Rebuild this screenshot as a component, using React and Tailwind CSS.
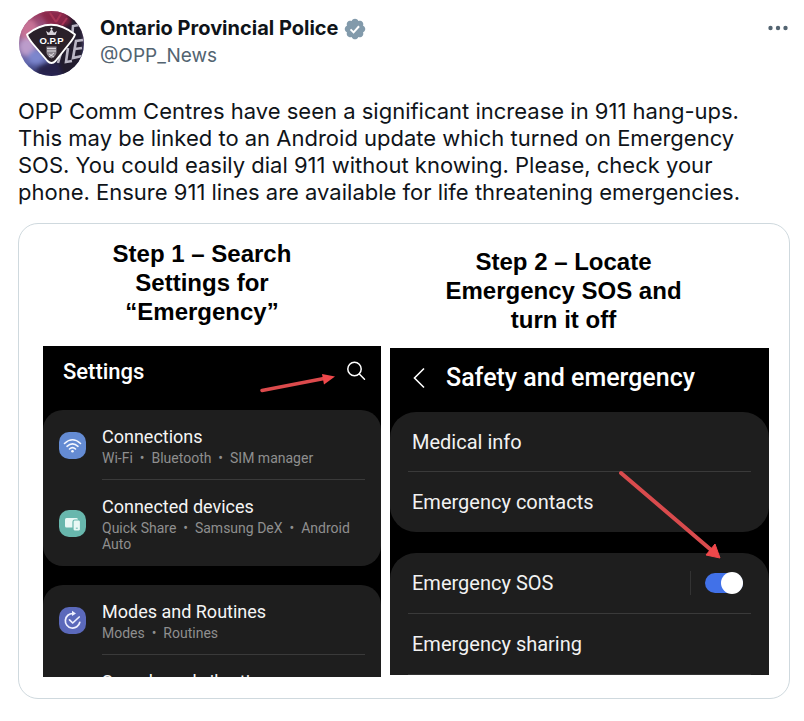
import React, { useState } from "react";

const settingsGroups = [
  [
    { title: "Connections", items: ["Wi-Fi", "Bluetooth", "SIM manager"], icon: "wifi" },
    { title: "Connected devices", items: ["Quick Share", "Samsung DeX", "Android Auto"], icon: "devices" },
  ],
  [
    { title: "Modes and Routines", items: ["Modes", "Routines"], icon: "routines" },
  ],
];

function Avatar() {
  return (
    <svg viewBox="0 0 65 65" className="w-[65px] h-[65px] shrink-0" role="img" aria-label="Ontario Provincial Police">
      <defs>
        <clipPath id="avatarClip"><circle cx="32.5" cy="32.5" r="32.5" /></clipPath>
        <linearGradient id="avatarBg" x1="0.3" y1="0" x2="0.45" y2="1">
          <stop offset="0" stopColor="#a03a5e" />
          <stop offset="0.45" stopColor="#8d6a9c" />
          <stop offset="0.75" stopColor="#6067ad" />
          <stop offset="1" stopColor="#2b2c5c" />
        </linearGradient>
        <filter id="avatarSoft"><feGaussianBlur stdDeviation="2" /></filter>
        <filter id="avatarEdge"><feGaussianBlur stdDeviation="0.5" /></filter>
      </defs>
      <g clipPath="url(#avatarClip)">
        <rect width="65" height="65" fill="url(#avatarBg)" />
        <g filter="url(#avatarSoft)">
          <ellipse cx="10" cy="20" rx="9" ry="12" fill="#c77295" />
          <ellipse cx="8" cy="36" rx="8" ry="9" fill="#bb9ccb" />
          <ellipse cx="17" cy="46" rx="8" ry="7" fill="#7c86cd" />
          <path d="M25 0h40v65H28l4-20 8-20z" fill="#211c2d" />
          <path d="M20 0h27l4 12-20 6z" fill="#8a2548" />
          <path d="M20 55l18-6 6 16H16z" fill="#26234b" />
        </g>
        <g filter="url(#avatarEdge)" fill="none">
          <path d="M31 2l6 9M42 3l-5 8M48 7l-5 7" stroke="#a93657" strokeWidth="2" />
          <path d="M60 14l-6 1-1 13M64 29l-7 1-3 17 9-2M63 37l-7 1M49 37l-2 14 6-1M42 42l-3 10" stroke="#b9b5c4" strokeWidth="2.600" />
        </g>
        <path d="M8 23.500Q32 4 56 23.500Q55 27 50 33L36.500 50Q32.500 54 28.500 50L14 33Q9 27 8 23.500Z" fill="#2a2029" stroke="#fff" strokeWidth="1.900" strokeLinejoin="round" />
        <path d="M28.500 24l-1.500-4 3 1.800 2.500-3.800 2.500 3.800 3-1.800-1.500 4z" fill="#d5d0d7" />
        <circle cx="32.500" cy="17.500" r="1.100" fill="#fff" />
        <text x="32.500" y="33" textAnchor="middle" fontFamily="Liberation Sans, sans-serif" fontWeight="700" fontSize="9.500" fill="#fff">O.P.P</text>
        <path d="M27.500 35.500h10v6.500q-1 3.500-5 5.500-4-2-5-5.500z" fill="#8b848d" />
        <path d="M28 37.500h9M28 40h9M30 43l5 3M35 42l-5 4" stroke="#e8e4ea" strokeWidth="0.900" />
      </g>
    </svg>
  );
}

function VerifiedBadge() {
  return (
    <svg viewBox="0 0 22 22" className="w-6 h-6 shrink-0" role="img" aria-label="Verified account">
      <path
        fill="#829aab"
        d="M20.396 11c-.018-.646-.215-1.275-.57-1.816-.354-.54-.852-.972-1.438-1.246.223-.607.27-1.264.14-1.897-.131-.634-.437-1.218-.882-1.687-.47-.445-1.053-.75-1.687-.882-.633-.13-1.290-.083-1.897.14-.273-.587-.704-1.086-1.245-1.440S11.647 1.620 11 1.604c-.646.017-1.273.213-1.813.568s-.969.854-1.240 1.440c-.608-.223-1.267-.272-1.902-.14-.635.130-1.220.436-1.690.882-.445.470-.749 1.055-.878 1.688-.130.633-.080 1.290.144 1.896-.587.274-1.087.705-1.443 1.245-.356.540-.555 1.170-.574 1.817.020.647.218 1.276.574 1.817.356.540.856.972 1.443 1.245-.224.606-.274 1.263-.144 1.896.130.634.433 1.218.877 1.688.470.443 1.054.747 1.687.878.633.132 1.290.084 1.897-.136.274.586.705 1.084 1.246 1.439.540.354 1.170.551 1.816.569.647-.016 1.276-.213 1.817-.567s.972-.854 1.245-1.440c.604.239 1.266.296 1.903.164.636-.132 1.220-.447 1.680-.907.460-.460.776-1.044.908-1.681s.075-1.299-.165-1.903c.586-.274 1.084-.705 1.439-1.246.354-.540.551-1.170.569-1.816z"
      />
      <path d="M6.900 11.300l2.800 2.800 5-5.600" fill="none" stroke="#fff" strokeWidth="1.800" />
    </svg>
  );
}

function RowIcon({ name }) {
  if (name === "wifi") {
    return (
      <svg viewBox="0 0 27 27" className="w-[27px] h-[27px] shrink-0" aria-hidden="true">
        <rect width="27" height="27" rx="10" fill="#648bd3" />
        <g fill="none" stroke="#f4f7ff" strokeWidth="1.600" strokeLinecap="round">
          <path d="M5.500 11.500q8-7.500 16 0" />
          <path d="M8 14.300q5.500-5 11 0" />
          <path d="M10.500 17q3-2.600 6 0" />
        </g>
        <circle cx="13.500" cy="19.300" r="1.300" fill="#f4f7ff" />
      </svg>
    );
  }
  if (name === "devices") {
    return (
      <svg viewBox="0 0 27 27" className="w-[27px] h-[27px] shrink-0" aria-hidden="true">
        <rect width="27" height="27" rx="10" fill="#68b7ad" />
        <rect x="6" y="8" width="13" height="9.500" rx="1.500" fill="#e9f8f5" />
        <rect x="14" y="10" width="7.500" height="11" rx="1.800" fill="#e9f8f5" stroke="#68b7ad" strokeWidth="1.200" />
        <path d="M16.800 18.200h2" stroke="#68b7ad" strokeWidth="1" />
      </svg>
    );
  }
  return (
    <svg viewBox="0 0 27 27" className="w-[27px] h-[27px] shrink-0" aria-hidden="true">
      <rect width="27" height="27" rx="10" fill="#5b69bb" />
      <g fill="none" stroke="#eef0ff" strokeWidth="1.700" strokeLinecap="round" strokeLinejoin="round">
        <path d="M14 6.500a7.300 7.300 0 1 0 6.800 8.800" />
        <path d="M10.500 12.800l3.200 3.200 6.500-6" />
      </g>
      <path d="M13 3.800l4 2.700-4 2.600z" fill="#eef0ff" />
    </svg>
  );
}

function SettingsRow({ title, items, icon, last }) {
  return (
    <li className="flex items-center gap-4 px-4">
      <RowIcon name={icon} />
      <div className={`flex-1 pt-[15px] ${last ? "pb-[14px]" : "pb-[13px] border-b border-[#3a3a3a]"}`}>
        <h4 className="text-[18px] leading-6 text-[#f5f5f5]">{title}</h4>
        <p className="mt-px text-sm leading-4 text-[#8f8f8f]">{items.join("\u00a0 • \u00a0")}</p>
      </div>
    </li>
  );
}

function SettingsPhone() {
  return (
    <div className="bg-black font-[Roboto,sans-serif] overflow-hidden">
      <div className="h-16 flex items-start pl-5 pr-[15px] pt-3">
        <h3 className="flex-1 text-[22px] leading-7 font-medium text-white">Settings</h3>
        <svg viewBox="0 0 76 22" className="w-[76px] h-[22px] mt-4 mr-2.5" aria-hidden="true">
          <path d="M2 16.500L64 4.500" stroke="#dc4a4c" strokeWidth="3.500" strokeLinecap="round" />
          <path d="M62 0l13 2.500-11 8z" fill="#f0484b" />
        </svg>
        <button aria-label="Search settings" className="mt-[3px]">
          <svg viewBox="0 0 20 20" className="w-5 h-5" fill="none" stroke="#fff" strokeWidth="1.500">
            <circle cx="8.500" cy="8" r="6.700" />
            <path d="M13.300 13l5.200 5.200" strokeLinecap="round" />
          </svg>
        </button>
      </div>
      <ul className="bg-[#1e1e1e] rounded-[20px]">
        {settingsGroups[0].map((row, i) => (
          <SettingsRow key={row.title} {...row} last={i === 1} />
        ))}
      </ul>
      <ul className="mt-[19px] bg-[#1e1e1e] rounded-t-[20px]">
        {settingsGroups[1].map((row) => (
          <SettingsRow key={row.title} {...row} />
        ))}
        {/* next row is cut off by the bottom of the screen */}
        <li className="h-[22px] overflow-hidden pl-[59px] pt-[15px]">
          <h4 className="text-[18px] leading-6 text-[#f5f5f5]">Sounds and vibration</h4>
        </li>
      </ul>
    </div>
  );
}

function SafetyPhone() {
  const [sosOn, setSosOn] = useState(true);

  return (
    <div className="relative bg-black font-[Roboto,sans-serif] overflow-hidden text-[20px] text-[#f2f2f2]">
      <div className="h-16 flex items-center pl-[22px] pb-1">
        <button aria-label="Back">
          <svg viewBox="0 0 16 22" className="w-4 h-[22px]" fill="none" stroke="#fff" strokeWidth="1.600">
            <path d="M12 1.500L2.500 11l9.500 9.500" />
          </svg>
        </button>
        <h3 className="ml-[18px] text-[25px] leading-8 font-medium text-white">Safety and emergency</h3>
      </div>
      <ul className="bg-[#1e1e1e] rounded-[26px] px-[18px]">
        <li className="h-[60px] flex items-center px-1 border-b border-[#3a3a3a]">Medical info</li>
        <li className="h-[60px] flex items-center px-1">Emergency contacts</li>
      </ul>
      <ul className="mt-[21px] bg-[#1e1e1e] rounded-t-[26px] px-[18px]">
        <li className="h-[61px] flex items-center pl-1 pr-2 border-b border-[#3a3a3a]">
          <label htmlFor="sos" className="flex-1">Emergency SOS</label>
          <span className="w-px h-6 mr-3.5 bg-[#333333]"></span>
          <input
            id="sos"
            type="checkbox"
            role="switch"
            checked={sosOn}
            onChange={(e) => setSosOn(e.target.checked)}
            className="appearance-none flex items-center w-[38px] h-5 rounded-full bg-[#666666] checked:bg-[#4171e8] before:content-[''] before:w-[22px] before:h-[22px] before:shrink-0 before:rounded-full before:bg-white checked:before:ml-4"
          />
        </li>
        <li className="h-[61px] flex items-center px-1 border-b border-[#333333]">Emergency sharing</li>
      </ul>
      <svg viewBox="0 0 104 90" className="absolute right-[47px] top-[122px] w-[104px] h-[90px] pointer-events-none" aria-hidden="true">
        <path d="M3 3L92 79" stroke="#d94b4d" strokeWidth="4" strokeLinecap="round" />
        <path d="M102 88L88 85l9-11z" fill="#f0484b" stroke="#f0484b" />
      </svg>
    </div>
  );
}

function App() {
  return (
    <article className="min-h-screen bg-white pl-[18px] pr-[14px] pt-[11px] pb-[22px] font-[Inter,sans-serif] text-[#0f1419]">
      <header className="flex items-start">
        <div className="pl-px"><Avatar /></div>
        <div className="flex-1 pl-4 pt-1">
          <div className="flex items-center gap-1">
            <h1 className="text-xl leading-[27px] font-bold">Ontario Provincial Police</h1>
            <VerifiedBadge />
          </div>
          <a href="#OPP_News" className="block text-[19px] leading-[27px] text-[#536471]">@OPP_News</a>
        </div>
        <button aria-label="More" className="mt-1.5">
          <svg viewBox="0 0 24 24" className="w-6 h-6" fill="#536471">
            <circle cx="4.500" cy="11" r="2.200" />
            <circle cx="12" cy="11" r="2.200" />
            <circle cx="19.500" cy="11" r="2.200" />
          </svg>
        </button>
      </header>

      <p className="mt-[22px] pr-6 text-[22px] leading-[27px]">
        OPP Comm Centres have seen a significant increase in 911 hang-ups. This may be linked to an Android update which turned on Emergency SOS. You could easily dial 911 without knowing. Please, check your phone. Ensure 911 lines are available for life threatening emergencies.
      </p>

      <section className="mt-[17px] grid grid-cols-[338fr_379fr] gap-[9px] items-start rounded-[20px] border border-[#cfd9de] pl-6 pr-5 pt-[15px] pb-[21px]">
        <div>
          <h2 className="mb-5 pr-5 text-center font-['Liberation_Sans',sans-serif] text-2xl leading-[29px] font-bold text-black">
            Step 1 – Search<br />Settings for<br />“Emergency”
          </h2>
          <SettingsPhone />
        </div>
        <div className="pt-2">
          <h2 className="mb-[14px] pr-8 text-center font-['Liberation_Sans',sans-serif] text-2xl leading-[29px] font-bold text-black">
            Step 2 – Locate<br />Emergency SOS and<br />turn it off
          </h2>
          <SafetyPhone />
        </div>
      </section>
    </article>
  );
}

export default App;
